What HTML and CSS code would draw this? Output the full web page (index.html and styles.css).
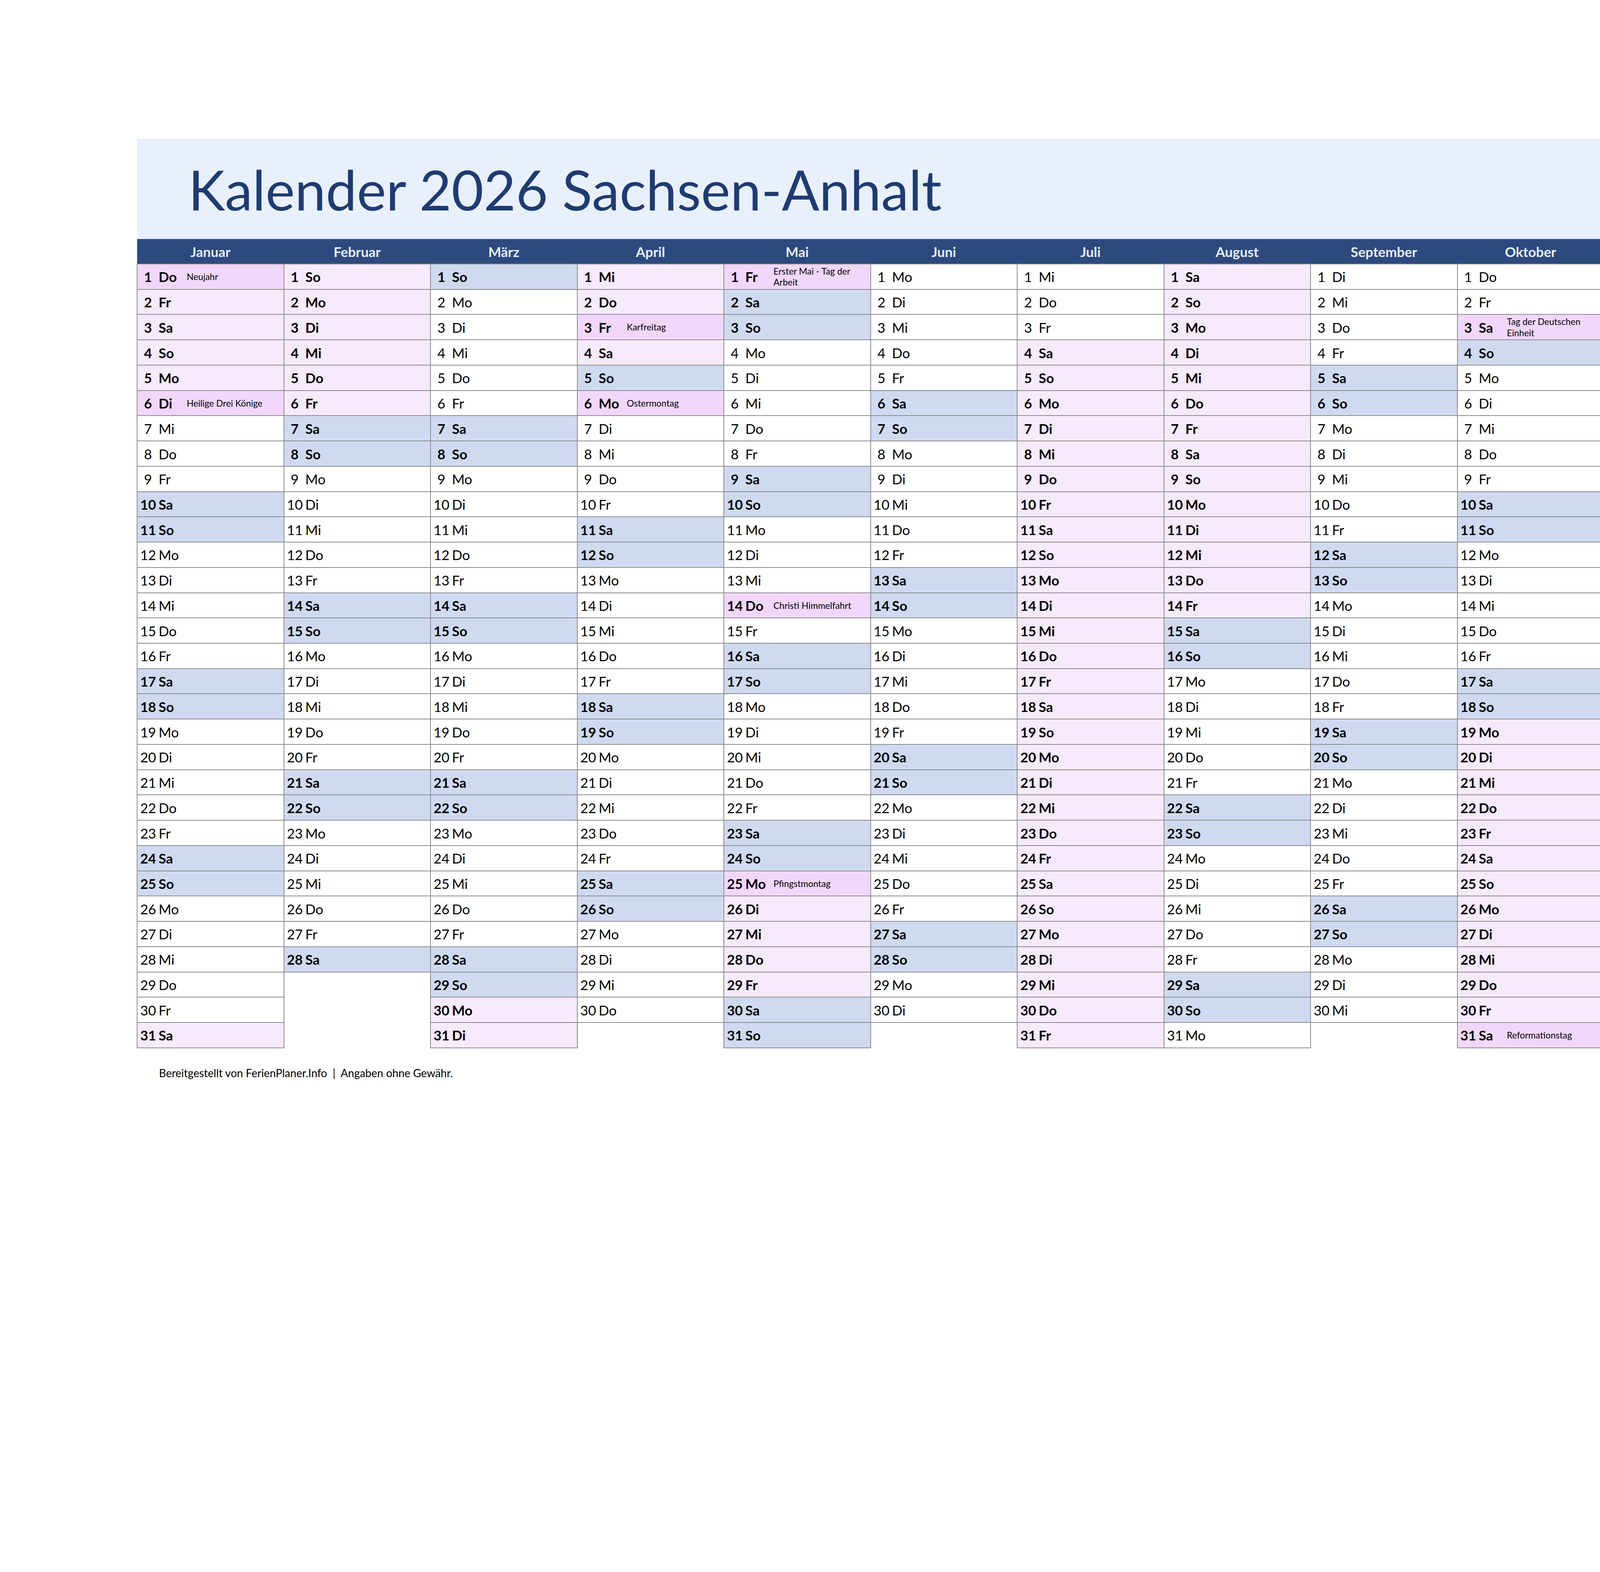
FILE: index.html
```html
<!DOCTYPE html>
<html lang="de">
<head>
<meta charset="utf-8">
<title>Kalender 2026 Sachsen-Anhalt</title>
<link rel="stylesheet" href="styles.css">
</head>
<body>
<div class="page">
<header class="banner"><h1 class="title">Kalender 2026 Sachsen-Anhalt</h1></header>
<div class="cal">

<div class="month">
<div class="mh">Januar</div>
<div class="c h"><span class="n">1</span>Do<span class="l">Neujahr</span></div>
<div class="c f"><span class="n">2</span>Fr</div>
<div class="c f"><span class="n">3</span>Sa</div>
<div class="c f"><span class="n">4</span>So</div>
<div class="c f"><span class="n">5</span>Mo</div>
<div class="c h"><span class="n">6</span>Di<span class="l">Heilige Drei Könige</span></div>
<div class="c"><span class="n">7</span>Mi</div>
<div class="c"><span class="n">8</span>Do</div>
<div class="c"><span class="n">9</span>Fr</div>
<div class="c w"><span class="n">10</span>Sa</div>
<div class="c w"><span class="n">11</span>So</div>
<div class="c"><span class="n">12</span>Mo</div>
<div class="c"><span class="n">13</span>Di</div>
<div class="c"><span class="n">14</span>Mi</div>
<div class="c"><span class="n">15</span>Do</div>
<div class="c"><span class="n">16</span>Fr</div>
<div class="c w"><span class="n">17</span>Sa</div>
<div class="c w"><span class="n">18</span>So</div>
<div class="c"><span class="n">19</span>Mo</div>
<div class="c"><span class="n">20</span>Di</div>
<div class="c"><span class="n">21</span>Mi</div>
<div class="c"><span class="n">22</span>Do</div>
<div class="c"><span class="n">23</span>Fr</div>
<div class="c w"><span class="n">24</span>Sa</div>
<div class="c w"><span class="n">25</span>So</div>
<div class="c"><span class="n">26</span>Mo</div>
<div class="c"><span class="n">27</span>Di</div>
<div class="c"><span class="n">28</span>Mi</div>
<div class="c"><span class="n">29</span>Do</div>
<div class="c"><span class="n">30</span>Fr</div>
<div class="c f"><span class="n">31</span>Sa</div>
</div>

<div class="month">
<div class="mh">Februar</div>
<div class="c f"><span class="n">1</span>So</div>
<div class="c f"><span class="n">2</span>Mo</div>
<div class="c f"><span class="n">3</span>Di</div>
<div class="c f"><span class="n">4</span>Mi</div>
<div class="c f"><span class="n">5</span>Do</div>
<div class="c f"><span class="n">6</span>Fr</div>
<div class="c w"><span class="n">7</span>Sa</div>
<div class="c w"><span class="n">8</span>So</div>
<div class="c"><span class="n">9</span>Mo</div>
<div class="c"><span class="n">10</span>Di</div>
<div class="c"><span class="n">11</span>Mi</div>
<div class="c"><span class="n">12</span>Do</div>
<div class="c"><span class="n">13</span>Fr</div>
<div class="c w"><span class="n">14</span>Sa</div>
<div class="c w"><span class="n">15</span>So</div>
<div class="c"><span class="n">16</span>Mo</div>
<div class="c"><span class="n">17</span>Di</div>
<div class="c"><span class="n">18</span>Mi</div>
<div class="c"><span class="n">19</span>Do</div>
<div class="c"><span class="n">20</span>Fr</div>
<div class="c w"><span class="n">21</span>Sa</div>
<div class="c w"><span class="n">22</span>So</div>
<div class="c"><span class="n">23</span>Mo</div>
<div class="c"><span class="n">24</span>Di</div>
<div class="c"><span class="n">25</span>Mi</div>
<div class="c"><span class="n">26</span>Do</div>
<div class="c"><span class="n">27</span>Fr</div>
<div class="c w"><span class="n">28</span>Sa</div>
<div class="c e"></div>
<div class="c e"></div>
<div class="c e"></div>
</div>

<div class="month">
<div class="mh">März</div>
<div class="c w"><span class="n">1</span>So</div>
<div class="c"><span class="n">2</span>Mo</div>
<div class="c"><span class="n">3</span>Di</div>
<div class="c"><span class="n">4</span>Mi</div>
<div class="c"><span class="n">5</span>Do</div>
<div class="c"><span class="n">6</span>Fr</div>
<div class="c w"><span class="n">7</span>Sa</div>
<div class="c w"><span class="n">8</span>So</div>
<div class="c"><span class="n">9</span>Mo</div>
<div class="c"><span class="n">10</span>Di</div>
<div class="c"><span class="n">11</span>Mi</div>
<div class="c"><span class="n">12</span>Do</div>
<div class="c"><span class="n">13</span>Fr</div>
<div class="c w"><span class="n">14</span>Sa</div>
<div class="c w"><span class="n">15</span>So</div>
<div class="c"><span class="n">16</span>Mo</div>
<div class="c"><span class="n">17</span>Di</div>
<div class="c"><span class="n">18</span>Mi</div>
<div class="c"><span class="n">19</span>Do</div>
<div class="c"><span class="n">20</span>Fr</div>
<div class="c w"><span class="n">21</span>Sa</div>
<div class="c w"><span class="n">22</span>So</div>
<div class="c"><span class="n">23</span>Mo</div>
<div class="c"><span class="n">24</span>Di</div>
<div class="c"><span class="n">25</span>Mi</div>
<div class="c"><span class="n">26</span>Do</div>
<div class="c"><span class="n">27</span>Fr</div>
<div class="c w"><span class="n">28</span>Sa</div>
<div class="c w"><span class="n">29</span>So</div>
<div class="c f"><span class="n">30</span>Mo</div>
<div class="c f"><span class="n">31</span>Di</div>
</div>

<div class="month">
<div class="mh">April</div>
<div class="c f"><span class="n">1</span>Mi</div>
<div class="c f"><span class="n">2</span>Do</div>
<div class="c h"><span class="n">3</span>Fr<span class="l">Karfreitag</span></div>
<div class="c f"><span class="n">4</span>Sa</div>
<div class="c w"><span class="n">5</span>So</div>
<div class="c h"><span class="n">6</span>Mo<span class="l">Ostermontag</span></div>
<div class="c"><span class="n">7</span>Di</div>
<div class="c"><span class="n">8</span>Mi</div>
<div class="c"><span class="n">9</span>Do</div>
<div class="c"><span class="n">10</span>Fr</div>
<div class="c w"><span class="n">11</span>Sa</div>
<div class="c w"><span class="n">12</span>So</div>
<div class="c"><span class="n">13</span>Mo</div>
<div class="c"><span class="n">14</span>Di</div>
<div class="c"><span class="n">15</span>Mi</div>
<div class="c"><span class="n">16</span>Do</div>
<div class="c"><span class="n">17</span>Fr</div>
<div class="c w"><span class="n">18</span>Sa</div>
<div class="c w"><span class="n">19</span>So</div>
<div class="c"><span class="n">20</span>Mo</div>
<div class="c"><span class="n">21</span>Di</div>
<div class="c"><span class="n">22</span>Mi</div>
<div class="c"><span class="n">23</span>Do</div>
<div class="c"><span class="n">24</span>Fr</div>
<div class="c w"><span class="n">25</span>Sa</div>
<div class="c w"><span class="n">26</span>So</div>
<div class="c"><span class="n">27</span>Mo</div>
<div class="c"><span class="n">28</span>Di</div>
<div class="c"><span class="n">29</span>Mi</div>
<div class="c"><span class="n">30</span>Do</div>
<div class="c e"></div>
</div>

<div class="month">
<div class="mh">Mai</div>
<div class="c h"><span class="n">1</span>Fr<span class="l">Erster Mai - Tag der Arbeit</span></div>
<div class="c w"><span class="n">2</span>Sa</div>
<div class="c w"><span class="n">3</span>So</div>
<div class="c"><span class="n">4</span>Mo</div>
<div class="c"><span class="n">5</span>Di</div>
<div class="c"><span class="n">6</span>Mi</div>
<div class="c"><span class="n">7</span>Do</div>
<div class="c"><span class="n">8</span>Fr</div>
<div class="c w"><span class="n">9</span>Sa</div>
<div class="c w"><span class="n">10</span>So</div>
<div class="c"><span class="n">11</span>Mo</div>
<div class="c"><span class="n">12</span>Di</div>
<div class="c"><span class="n">13</span>Mi</div>
<div class="c h"><span class="n">14</span>Do<span class="l">Christi Himmelfahrt</span></div>
<div class="c"><span class="n">15</span>Fr</div>
<div class="c w"><span class="n">16</span>Sa</div>
<div class="c w"><span class="n">17</span>So</div>
<div class="c"><span class="n">18</span>Mo</div>
<div class="c"><span class="n">19</span>Di</div>
<div class="c"><span class="n">20</span>Mi</div>
<div class="c"><span class="n">21</span>Do</div>
<div class="c"><span class="n">22</span>Fr</div>
<div class="c w"><span class="n">23</span>Sa</div>
<div class="c w"><span class="n">24</span>So</div>
<div class="c h"><span class="n">25</span>Mo<span class="l">Pfingstmontag</span></div>
<div class="c f"><span class="n">26</span>Di</div>
<div class="c f"><span class="n">27</span>Mi</div>
<div class="c f"><span class="n">28</span>Do</div>
<div class="c f"><span class="n">29</span>Fr</div>
<div class="c w"><span class="n">30</span>Sa</div>
<div class="c w"><span class="n">31</span>So</div>
</div>

<div class="month">
<div class="mh">Juni</div>
<div class="c"><span class="n">1</span>Mo</div>
<div class="c"><span class="n">2</span>Di</div>
<div class="c"><span class="n">3</span>Mi</div>
<div class="c"><span class="n">4</span>Do</div>
<div class="c"><span class="n">5</span>Fr</div>
<div class="c w"><span class="n">6</span>Sa</div>
<div class="c w"><span class="n">7</span>So</div>
<div class="c"><span class="n">8</span>Mo</div>
<div class="c"><span class="n">9</span>Di</div>
<div class="c"><span class="n">10</span>Mi</div>
<div class="c"><span class="n">11</span>Do</div>
<div class="c"><span class="n">12</span>Fr</div>
<div class="c w"><span class="n">13</span>Sa</div>
<div class="c w"><span class="n">14</span>So</div>
<div class="c"><span class="n">15</span>Mo</div>
<div class="c"><span class="n">16</span>Di</div>
<div class="c"><span class="n">17</span>Mi</div>
<div class="c"><span class="n">18</span>Do</div>
<div class="c"><span class="n">19</span>Fr</div>
<div class="c w"><span class="n">20</span>Sa</div>
<div class="c w"><span class="n">21</span>So</div>
<div class="c"><span class="n">22</span>Mo</div>
<div class="c"><span class="n">23</span>Di</div>
<div class="c"><span class="n">24</span>Mi</div>
<div class="c"><span class="n">25</span>Do</div>
<div class="c"><span class="n">26</span>Fr</div>
<div class="c w"><span class="n">27</span>Sa</div>
<div class="c w"><span class="n">28</span>So</div>
<div class="c"><span class="n">29</span>Mo</div>
<div class="c"><span class="n">30</span>Di</div>
<div class="c e"></div>
</div>

<div class="month">
<div class="mh">Juli</div>
<div class="c"><span class="n">1</span>Mi</div>
<div class="c"><span class="n">2</span>Do</div>
<div class="c"><span class="n">3</span>Fr</div>
<div class="c f"><span class="n">4</span>Sa</div>
<div class="c f"><span class="n">5</span>So</div>
<div class="c f"><span class="n">6</span>Mo</div>
<div class="c f"><span class="n">7</span>Di</div>
<div class="c f"><span class="n">8</span>Mi</div>
<div class="c f"><span class="n">9</span>Do</div>
<div class="c f"><span class="n">10</span>Fr</div>
<div class="c f"><span class="n">11</span>Sa</div>
<div class="c f"><span class="n">12</span>So</div>
<div class="c f"><span class="n">13</span>Mo</div>
<div class="c f"><span class="n">14</span>Di</div>
<div class="c f"><span class="n">15</span>Mi</div>
<div class="c f"><span class="n">16</span>Do</div>
<div class="c f"><span class="n">17</span>Fr</div>
<div class="c f"><span class="n">18</span>Sa</div>
<div class="c f"><span class="n">19</span>So</div>
<div class="c f"><span class="n">20</span>Mo</div>
<div class="c f"><span class="n">21</span>Di</div>
<div class="c f"><span class="n">22</span>Mi</div>
<div class="c f"><span class="n">23</span>Do</div>
<div class="c f"><span class="n">24</span>Fr</div>
<div class="c f"><span class="n">25</span>Sa</div>
<div class="c f"><span class="n">26</span>So</div>
<div class="c f"><span class="n">27</span>Mo</div>
<div class="c f"><span class="n">28</span>Di</div>
<div class="c f"><span class="n">29</span>Mi</div>
<div class="c f"><span class="n">30</span>Do</div>
<div class="c f"><span class="n">31</span>Fr</div>
</div>

<div class="month">
<div class="mh">August</div>
<div class="c f"><span class="n">1</span>Sa</div>
<div class="c f"><span class="n">2</span>So</div>
<div class="c f"><span class="n">3</span>Mo</div>
<div class="c f"><span class="n">4</span>Di</div>
<div class="c f"><span class="n">5</span>Mi</div>
<div class="c f"><span class="n">6</span>Do</div>
<div class="c f"><span class="n">7</span>Fr</div>
<div class="c f"><span class="n">8</span>Sa</div>
<div class="c f"><span class="n">9</span>So</div>
<div class="c f"><span class="n">10</span>Mo</div>
<div class="c f"><span class="n">11</span>Di</div>
<div class="c f"><span class="n">12</span>Mi</div>
<div class="c f"><span class="n">13</span>Do</div>
<div class="c f"><span class="n">14</span>Fr</div>
<div class="c w"><span class="n">15</span>Sa</div>
<div class="c w"><span class="n">16</span>So</div>
<div class="c"><span class="n">17</span>Mo</div>
<div class="c"><span class="n">18</span>Di</div>
<div class="c"><span class="n">19</span>Mi</div>
<div class="c"><span class="n">20</span>Do</div>
<div class="c"><span class="n">21</span>Fr</div>
<div class="c w"><span class="n">22</span>Sa</div>
<div class="c w"><span class="n">23</span>So</div>
<div class="c"><span class="n">24</span>Mo</div>
<div class="c"><span class="n">25</span>Di</div>
<div class="c"><span class="n">26</span>Mi</div>
<div class="c"><span class="n">27</span>Do</div>
<div class="c"><span class="n">28</span>Fr</div>
<div class="c w"><span class="n">29</span>Sa</div>
<div class="c w"><span class="n">30</span>So</div>
<div class="c"><span class="n">31</span>Mo</div>
</div>

<div class="month">
<div class="mh">September</div>
<div class="c"><span class="n">1</span>Di</div>
<div class="c"><span class="n">2</span>Mi</div>
<div class="c"><span class="n">3</span>Do</div>
<div class="c"><span class="n">4</span>Fr</div>
<div class="c w"><span class="n">5</span>Sa</div>
<div class="c w"><span class="n">6</span>So</div>
<div class="c"><span class="n">7</span>Mo</div>
<div class="c"><span class="n">8</span>Di</div>
<div class="c"><span class="n">9</span>Mi</div>
<div class="c"><span class="n">10</span>Do</div>
<div class="c"><span class="n">11</span>Fr</div>
<div class="c w"><span class="n">12</span>Sa</div>
<div class="c w"><span class="n">13</span>So</div>
<div class="c"><span class="n">14</span>Mo</div>
<div class="c"><span class="n">15</span>Di</div>
<div class="c"><span class="n">16</span>Mi</div>
<div class="c"><span class="n">17</span>Do</div>
<div class="c"><span class="n">18</span>Fr</div>
<div class="c w"><span class="n">19</span>Sa</div>
<div class="c w"><span class="n">20</span>So</div>
<div class="c"><span class="n">21</span>Mo</div>
<div class="c"><span class="n">22</span>Di</div>
<div class="c"><span class="n">23</span>Mi</div>
<div class="c"><span class="n">24</span>Do</div>
<div class="c"><span class="n">25</span>Fr</div>
<div class="c w"><span class="n">26</span>Sa</div>
<div class="c w"><span class="n">27</span>So</div>
<div class="c"><span class="n">28</span>Mo</div>
<div class="c"><span class="n">29</span>Di</div>
<div class="c"><span class="n">30</span>Mi</div>
<div class="c e"></div>
</div>

<div class="month">
<div class="mh">Oktober</div>
<div class="c"><span class="n">1</span>Do</div>
<div class="c"><span class="n">2</span>Fr</div>
<div class="c h"><span class="n">3</span>Sa<span class="l">Tag der Deutschen Einheit</span></div>
<div class="c w"><span class="n">4</span>So</div>
<div class="c"><span class="n">5</span>Mo</div>
<div class="c"><span class="n">6</span>Di</div>
<div class="c"><span class="n">7</span>Mi</div>
<div class="c"><span class="n">8</span>Do</div>
<div class="c"><span class="n">9</span>Fr</div>
<div class="c w"><span class="n">10</span>Sa</div>
<div class="c w"><span class="n">11</span>So</div>
<div class="c"><span class="n">12</span>Mo</div>
<div class="c"><span class="n">13</span>Di</div>
<div class="c"><span class="n">14</span>Mi</div>
<div class="c"><span class="n">15</span>Do</div>
<div class="c"><span class="n">16</span>Fr</div>
<div class="c w"><span class="n">17</span>Sa</div>
<div class="c w"><span class="n">18</span>So</div>
<div class="c f"><span class="n">19</span>Mo</div>
<div class="c f"><span class="n">20</span>Di</div>
<div class="c f"><span class="n">21</span>Mi</div>
<div class="c f"><span class="n">22</span>Do</div>
<div class="c f"><span class="n">23</span>Fr</div>
<div class="c f"><span class="n">24</span>Sa</div>
<div class="c f"><span class="n">25</span>So</div>
<div class="c f"><span class="n">26</span>Mo</div>
<div class="c f"><span class="n">27</span>Di</div>
<div class="c f"><span class="n">28</span>Mi</div>
<div class="c f"><span class="n">29</span>Do</div>
<div class="c f"><span class="n">30</span>Fr</div>
<div class="c h"><span class="n">31</span>Sa<span class="l">Reformationstag</span></div>
</div>

<div class="month">
<div class="mh">November</div>
<div class="c w"><span class="n">1</span>So</div>
<div class="c"><span class="n">2</span>Mo</div>
<div class="c"><span class="n">3</span>Di</div>
<div class="c"><span class="n">4</span>Mi</div>
<div class="c"><span class="n">5</span>Do</div>
<div class="c"><span class="n">6</span>Fr</div>
<div class="c w"><span class="n">7</span>Sa</div>
<div class="c w"><span class="n">8</span>So</div>
<div class="c"><span class="n">9</span>Mo</div>
<div class="c"><span class="n">10</span>Di</div>
<div class="c"><span class="n">11</span>Mi</div>
<div class="c"><span class="n">12</span>Do</div>
<div class="c"><span class="n">13</span>Fr</div>
<div class="c w"><span class="n">14</span>Sa</div>
<div class="c w"><span class="n">15</span>So</div>
<div class="c"><span class="n">16</span>Mo</div>
<div class="c"><span class="n">17</span>Di</div>
<div class="c"><span class="n">18</span>Mi</div>
<div class="c"><span class="n">19</span>Do</div>
<div class="c"><span class="n">20</span>Fr</div>
<div class="c w"><span class="n">21</span>Sa</div>
<div class="c w"><span class="n">22</span>So</div>
<div class="c"><span class="n">23</span>Mo</div>
<div class="c"><span class="n">24</span>Di</div>
<div class="c"><span class="n">25</span>Mi</div>
<div class="c"><span class="n">26</span>Do</div>
<div class="c"><span class="n">27</span>Fr</div>
<div class="c w"><span class="n">28</span>Sa</div>
<div class="c w"><span class="n">29</span>So</div>
<div class="c"><span class="n">30</span>Mo</div>
<div class="c e"></div>
</div>

<div class="month">
<div class="mh">Dezember</div>
<div class="c"><span class="n">1</span>Di</div>
<div class="c"><span class="n">2</span>Mi</div>
<div class="c"><span class="n">3</span>Do</div>
<div class="c"><span class="n">4</span>Fr</div>
<div class="c w"><span class="n">5</span>Sa</div>
<div class="c w"><span class="n">6</span>So</div>
<div class="c"><span class="n">7</span>Mo</div>
<div class="c"><span class="n">8</span>Di</div>
<div class="c"><span class="n">9</span>Mi</div>
<div class="c"><span class="n">10</span>Do</div>
<div class="c"><span class="n">11</span>Fr</div>
<div class="c w"><span class="n">12</span>Sa</div>
<div class="c w"><span class="n">13</span>So</div>
<div class="c"><span class="n">14</span>Mo</div>
<div class="c"><span class="n">15</span>Di</div>
<div class="c"><span class="n">16</span>Mi</div>
<div class="c"><span class="n">17</span>Do</div>
<div class="c"><span class="n">18</span>Fr</div>
<div class="c w"><span class="n">19</span>Sa</div>
<div class="c w"><span class="n">20</span>So</div>
<div class="c f"><span class="n">21</span>Mo</div>
<div class="c f"><span class="n">22</span>Di</div>
<div class="c f"><span class="n">23</span>Mi</div>
<div class="c h"><span class="n">24</span>Do<span class="l">Heilig Abend</span></div>
<div class="c h"><span class="n">25</span>Fr<span class="l">1. Weihnachtsfeiertag</span></div>
<div class="c h"><span class="n">26</span>Sa<span class="l">2. Weihnachtsfeiertag</span></div>
<div class="c f"><span class="n">27</span>So</div>
<div class="c f"><span class="n">28</span>Mo</div>
<div class="c f"><span class="n">29</span>Di</div>
<div class="c f"><span class="n">30</span>Mi</div>
<div class="c h"><span class="n">31</span>Do<span class="l">Silvester</span></div>
</div>

</div>
<p class="foot">Bereitgestellt von FerienPlaner.Info &nbsp;|&nbsp; Angaben ohne Gewähr.</p>
</div>
</body>
</html>
```

FILE: styles.css
```css
html, body {
  margin: 0;
  padding: 0;
  background: #ffffff;
}

body {
  font-family: Lato, "Noto Sans", "DejaVu Sans", sans-serif;
  color: #000000;
}

.page {
  padding: 355px 0 0 351px;
  width: 4506px;
}

.banner {
  height: 257px;
  background: #e9f0fd;
  display: flex;
  align-items: center;
  padding-left: 131px;
  box-sizing: border-box;
}

.title {
  margin: 0;
  font-size: 142px;
  font-weight: 400;
  line-height: normal;
  color: #1f3b70;
  white-space: nowrap;
}

.cal {
  display: grid;
  grid-template-columns: repeat(12, 375.5px);
}

.month {
  display: flex;
  flex-direction: column;
}

.mh {
  height: 64px;
  background: #2d4a7e;
  color: #e9eff9;
  font-size: 35px;
  font-weight: 700;
  display: flex;
  align-items: center;
  justify-content: center;
}

.c {
  height: 64.74px;
  box-sizing: border-box;
  display: grid;
  grid-template-columns: 40px 65px 1fr;
  column-gap: 7px;
  align-items: center;
  padding-left: 8px;
  font-size: 35px;
  font-weight: 400;
  background: #ffffff;
  outline: 2px solid #8c8c8c;
  outline-offset: -1px;
  white-space: nowrap;
}

.n {
  text-align: center;
}

.c.w {
  background: #cfdaf1;
  font-weight: 700;
}

.c.f {
  background: #f6eafd;
  font-weight: 700;
}

.c.h {
  background: #f2d7fd;
  font-weight: 700;
}

.c.e {
  background: transparent;
  outline: none;
}

.l {
  font-size: 23px;
  font-weight: 400;
  line-height: 1.25;
  white-space: normal;
  padding-right: 2px;
}

.foot {
  margin: 47px 0 0 56px;
  font-size: 28px;
  line-height: normal;
  color: #000000;
}
```
